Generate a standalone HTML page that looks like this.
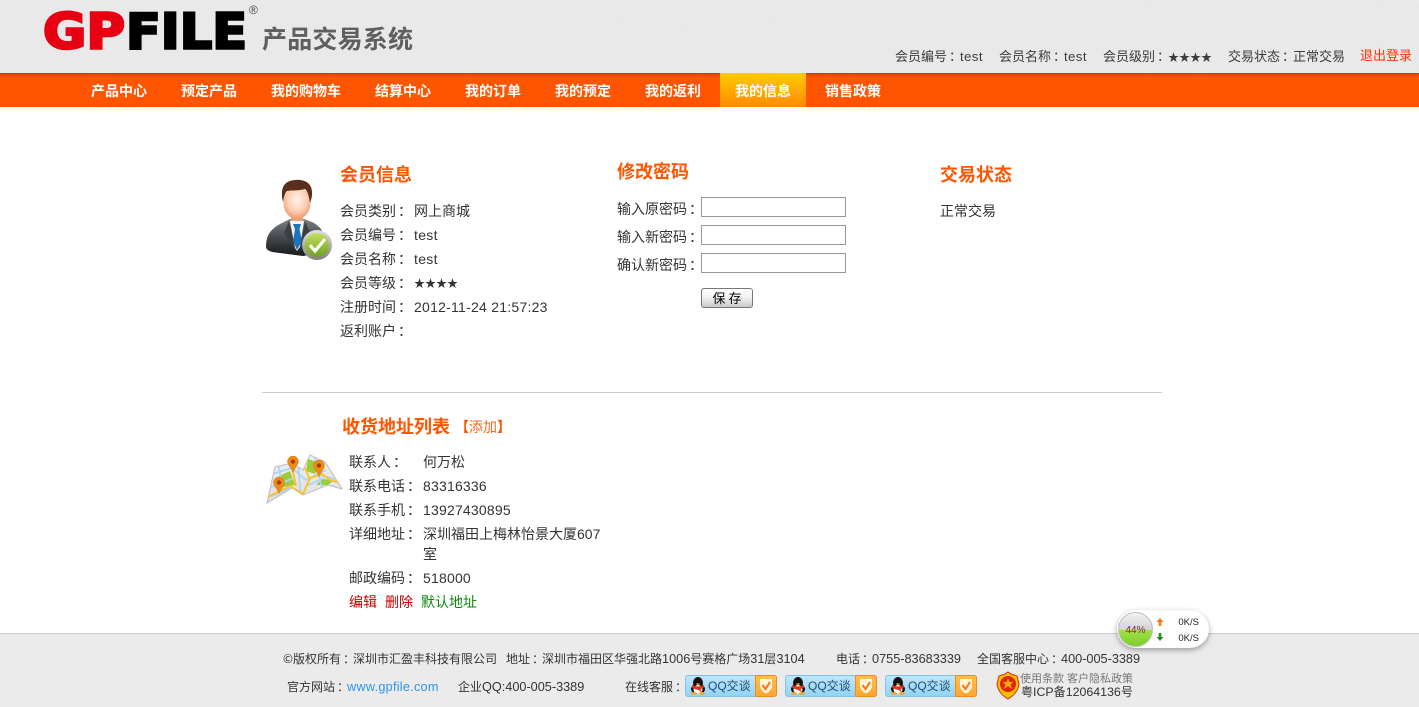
<!DOCTYPE html>
<html lang="zh-CN">
<head>
<meta charset="utf-8">
<title>GPFILE 产品交易系统</title>
<style>
html,body{margin:0;padding:0;width:1419px;height:707px;overflow:hidden;background:#fff}
body{position:relative;font-family:"Liberation Sans","Noto Sans CJK SC",sans-serif;font-size:14px;color:#333}
.t{position:absolute;white-space:nowrap;line-height:20px;height:20px}
.c{font-family:"Noto Sans CJK TC",sans-serif;position:relative;left:2px}
.d{font-size:12.7px}
.st{font-family:"Noto Sans CJK SC",sans-serif;font-size:11px}
a{text-decoration:none;color:inherit}
#hdr{position:absolute;left:0;top:0;width:1419px;height:73px;background:#eeeeee}
#nav{position:absolute;left:0;top:73px;width:1419px;height:34px;background:linear-gradient(#b84000 0,#e65000 2px,#f95300 4px,#ff5500 6px,#ff5500 100%)}
#act{position:absolute;left:720px;top:73px;width:86px;height:34px;background:linear-gradient(#ffcc00,#ff8a00)}
.n{color:#fff;font-weight:bold;font-size:14px;top:81px}
.h{color:#ff5500;font-weight:bold;font-size:18px;line-height:24px;height:24px}
.top{font-size:13px;top:46px;color:#3c3c3c}
.top .l{letter-spacing:.5px}
.in{position:absolute;left:701px;width:143px;height:18px;border:1px solid #999;background:#fff}
#btn{position:absolute;left:701px;top:288px;width:50px;height:18px;border:1px solid #777;border-radius:3px;background:linear-gradient(#fff,#f2f2f2 45%,#c9c9c9);font-size:13px;line-height:18px;text-align:center;color:#000;font-family:"WenQuanYi Zen Hei","Noto Sans CJK SC",sans-serif}
#line{position:absolute;left:262px;top:392px;width:900px;height:1px;background:#ccc}
#ftr{position:absolute;left:0;top:633px;width:1419px;height:74px;background:#ebebeb;border-top:1px solid #ccc;box-sizing:border-box}
.f{font-size:12px;color:#333}
.qq{position:absolute;top:675px;width:92px;height:22px;box-sizing:border-box;border:1px solid #7cc6ee;border-radius:3px;background:linear-gradient(#bfe7fb,#94d3f5)}
.qq b{position:absolute;right:-1px;top:-1px;width:20px;height:20px;border:1px solid #f08c1e;border-radius:0 3px 3px 0;background:linear-gradient(#ffc050,#ffa52e)}
.qq span{position:absolute;left:22px;top:0;line-height:20px;font-size:12px;color:#1b4d70;white-space:nowrap}
.qq svg{position:absolute}
#w{position:absolute;left:1117px;top:610px;width:92px;height:38px;background:#fff;border-radius:19px;box-shadow:0 2px 6px rgba(0,0,0,.35)}
.s{position:absolute;font-size:9.5px;line-height:12px;color:#222;right:10px}
</style>
</head>
<body>
<div id="hdr">
<svg width="1419" height="73" style="position:absolute;left:0;top:0">
<filter id="n"><feTurbulence type="fractalNoise" baseFrequency=".7" numOctaves="2" seed="4"/><feColorMatrix values="0 0 0 0 0 0 0 0 0 0 0 0 0 0 0 0 0 0 .14 0"/></filter>
<rect width="1419" height="73" filter="url(#n)" opacity=".3"/>
<text x="43" y="48.700" font-family="DejaVu Sans" font-weight="bold" font-size="49" fill="#e60012" stroke="#e60012" stroke-width="2.600" textLength="82" lengthAdjust="spacingAndGlyphs">GP</text>
<text x="126" y="48.700" font-family="DejaVu Sans" font-weight="bold" font-size="49" fill="#000" stroke="#000" stroke-width="2.600" textLength="121" lengthAdjust="spacingAndGlyphs">FILE</text>
<text x="249" y="14" font-family="Liberation Sans" font-size="12" fill="#444">®</text>
<text x="262" y="48" font-family="Noto Sans CJK SC" font-weight="bold" font-size="25" fill="#5f5f5f" textLength="151">产品交易系统</text>
</svg>
</div>
<div id="nav"></div>
<div id="act"></div>
<span class="t n" style="left:91px">产品中心</span>
<span class="t n" style="left:181px">预定产品</span>
<span class="t n" style="left:271px">我的购物车</span>
<span class="t n" style="left:375px">结算中心</span>
<span class="t n" style="left:465px">我的订单</span>
<span class="t n" style="left:555px">我的预定</span>
<span class="t n" style="left:645px">我的返利</span>
<span class="t n" style="left:735px">我的信息</span>
<span class="t n" style="left:825px">销售政策</span>

<span class="t top" style="left:895px">会员编号<span class="c">：</span><span class="l">test</span></span>
<span class="t top" style="left:999px">会员名称<span class="c">：</span><span class="l">test</span></span>
<span class="t top" style="left:1103px">会员级别<span class="c">：</span><span class="st">★★★★</span></span>
<span class="t top" style="left:1228px">交易状态<span class="c">：</span>正常交易</span>
<span class="t top" style="left:1360px;color:#ff3300">退出登录</span>

<!-- person -->
<svg style="position:absolute;left:260px;top:175px" width="80" height="90" viewBox="0 0 80 90">
<defs>
<linearGradient id="su" x1="0" y1="0" x2="0" y2="1"><stop offset="0" stop-color="#7d8185"/><stop offset=".45" stop-color="#4a4d51"/><stop offset="1" stop-color="#17191c"/></linearGradient>
<radialGradient id="fa" cx=".5" cy=".4" r=".65"><stop offset="0" stop-color="#fff3ec"/><stop offset=".55" stop-color="#fcd0b4"/><stop offset="1" stop-color="#e98f5e"/></radialGradient>
<linearGradient id="gr" x1="0" y1="0" x2="0" y2="1"><stop offset="0" stop-color="#e2e2e2"/><stop offset="1" stop-color="#808080"/></linearGradient>
<linearGradient id="gn" x1="0" y1="0" x2="0" y2="1"><stop offset="0" stop-color="#c4de5e"/><stop offset="1" stop-color="#6fa21f"/></linearGradient>
</defs>
<path d="M6 72 C6 62 9 55 20 49 L30 44 L44 44 L52 47 C58 50 62 54 64 60 L60 78 L43 81 L12 77 Q6 75 6 72 Z" fill="url(#su)"/>
<path d="M30 46 L35 73 L37 76 L40 72 L44 46 L37 42 Z" fill="#f3f5f8"/>
<path d="M33 49 L41 49 L39.500 54 L42 66 L37 75 L33 66 L35 54 Z" fill="#1c74bb"/>
<path d="M29 46 L35 74 L24 58 Z M45 46 L40 74 L50 58 Z" fill="#3b3e42"/>
<rect x="31" y="36" width="12" height="10" fill="#e8a27a"/>
<ellipse cx="37" cy="28" rx="13.500" ry="16" fill="url(#fa)"/>
<path d="M23 27 C20 14 23 6 35 5 C46 4 53 9 52 20 C52 22 51 25 50 28 C49 21 48 17 45 14 C38 16 31 15 27 16 C25 18 24 22 23 27 Z" fill="#5b2f1d"/>
<circle cx="57" cy="70" r="15" fill="url(#gr)"/>
<circle cx="57" cy="70" r="12" fill="url(#gn)"/>
<path d="M50 70 L55 76 L65 64" fill="none" stroke="#fff" stroke-width="3.200"/>
</svg>

<span class="t h" style="left:340px;top:163px">会员信息</span>
<span class="t" style="left:340px;top:201px">会员类别<span class="c">：</span></span><span class="t" style="left:414px;top:201px">网上商城</span>
<span class="t" style="left:340px;top:225px">会员编号<span class="c">：</span></span><span class="t" style="left:414px;top:225px;letter-spacing:.3px">test</span>
<span class="t" style="left:340px;top:249px">会员名称<span class="c">：</span></span><span class="t" style="left:414px;top:249px;letter-spacing:.3px">test</span>
<span class="t" style="left:340px;top:273px">会员等级<span class="c">：</span></span><span class="t st" style="left:414px;top:273px">★★★★</span>
<span class="t" style="left:340px;top:297px">注册时间<span class="c">：</span></span><span class="t" style="left:414px;top:297px;letter-spacing:.25px">2012-11-24 21:57:23</span>
<span class="t" style="left:340px;top:321px">返利账户<span class="c">：</span></span>

<span class="t h" style="left:617px;top:160px">修改密码</span>
<span class="t" style="left:617px;top:199px">输入原密码<span class="c">：</span></span>
<span class="t" style="left:617px;top:227px">输入新密码<span class="c">：</span></span>
<span class="t" style="left:617px;top:255px">确认新密码<span class="c">：</span></span>
<div class="in" style="top:197px"></div>
<div class="in" style="top:225px"></div>
<div class="in" style="top:253px"></div>
<div id="btn">保 存</div>

<span class="t h" style="left:940px;top:163px">交易状态</span>
<span class="t" style="left:940px;top:201px">正常交易</span>

<div id="line"></div>

<span class="t h" style="left:342px;top:415px">收货地址列表</span>
<span class="t" style="left:455px;top:417px;color:#ff5500"><b>【</b><span style="color:#f26a1e">添加</span><b>】</b></span>

<!-- map -->
<svg style="position:absolute;left:260px;top:450px" width="85" height="60" viewBox="0 0 85 60">
<defs><linearGradient id="m" x1="0" y1="0" x2="0" y2="1"><stop offset="0" stop-color="#f0f2f3"/><stop offset="1" stop-color="#dcdee0"/></linearGradient>
<clipPath id="mc"><path d="M7 53 L15 17 L32 13 L43 20 L50 5 L65 12 L82 39 L68 35 L43 45 L32 38 Z"/></clipPath></defs>
<path d="M7 53 L15 17 L32 13 L43 20 L50 5 L65 12 L82 39 L68 35 L43 45 L32 38 Z" fill="url(#m)" stroke="#c4c4c4" stroke-width="1.200"/>
<g clip-path="url(#mc)">
<path d="M19 26 L30 21 L35 35 L23 37 Z M48 9 L60 13 L55 24 L46 21 Z M62 29 L74 30 L68 35 L56 35 Z" fill="#9ccb3c"/>
<path d="M12 24 L32 18 L46 30 L66 20 M18 12 L24 48 M9 38 L34 28 M54 6 L62 38 M38 14 L41 46 M56 24 L78 30 M12 46 L30 38 M46 36 L64 28" fill="none" stroke="#aed6f2" stroke-width="1.800"/>
<path d="M8 47 L30 36 L43 44 L50 28 L62 24 L70 30 L84 34 M31 12 L36 36 M45 18 L50 30" fill="none" stroke="#fdc22f" stroke-width="2"/>
</g>
<g fill="#ee8a12" stroke="#c96f08" stroke-width=".4">
<path d="M33 6 a5.500 5.500 0 0 1 5.500 5.500 c0 3 -3.500 6 -5.500 11 c-2 -5 -5.500 -8 -5.500 -11 a5.500 5.500 0 0 1 5.500 -5.500 Z"/>
<path d="M59 10 a5.500 5.500 0 0 1 5.500 5.500 c0 3 -3.500 6 -5.500 11 c-2 -5 -5.500 -8 -5.500 -11 a5.500 5.500 0 0 1 5.500 -5.500 Z"/>
<path d="M19 27 a5.500 5.500 0 0 1 5.500 5.500 c0 3 -3.500 6 -5.500 11 c-2 -5 -5.500 -8 -5.500 -11 a5.500 5.500 0 0 1 5.500 -5.500 Z"/>
</g>
<g fill="#a5400c"><circle cx="33" cy="11.500" r="2.200"/><circle cx="59" cy="15.500" r="2.200"/><circle cx="19" cy="32.500" r="2.200"/></g>
</svg>

<span class="t" style="left:349px;top:452px">联系人<span class="c">：</span></span><span class="t" style="left:423px;top:452px">何万松</span>
<span class="t" style="left:349px;top:476px">联系电话<span class="c">：</span></span><span class="t" style="left:423px;top:476px;letter-spacing:.2px">83316336</span>
<span class="t" style="left:349px;top:500px">联系手机<span class="c">：</span></span><span class="t" style="left:423px;top:500px;letter-spacing:.2px">13927430895</span>
<span class="t" style="left:349px;top:524px">详细地址<span class="c">：</span></span><span class="t" style="left:423px;top:524px">深圳福田上梅林怡景大厦607</span>
<span class="t" style="left:423px;top:544px">室</span>
<span class="t" style="left:349px;top:568px">邮政编码<span class="c">：</span></span><span class="t" style="left:423px;top:568px;letter-spacing:.2px">518000</span>
<span class="t" style="left:349px;top:592px;color:#c00000">编辑</span>
<span class="t" style="left:385px;top:592px;color:#c00000">删除</span>
<span class="t" style="left:421px;top:592px;color:#0a8a0a">默认地址</span>

<div id="ftr"></div>
<span class="t f" style="left:283px;top:649px"><span style="font-family:'Noto Sans CJK SC'">©</span>版权所有<span class="c">：</span>深圳市汇盈丰科技有限公司</span>
<span class="t f" style="left:506px;top:649px">地址<span class="c">：</span>深圳市福田区华强北路<span class="d">1006</span>号赛格广场<span class="d">31</span>层<span class="d">3104</span></span>
<span class="t f" style="left:836px;top:649px">电话<span class="c">：</span><span class="d">0755-83683339</span></span>
<span class="t f" style="left:977px;top:649px">全国客服中心<span class="c">：</span><span class="d">400-005-3389</span></span>
<span class="t f" style="left:287px;top:677px">官方网站<span class="c">：</span><span class="d" style="color:#2f95ea;letter-spacing:.25px">www.gpfile.com</span></span>
<span class="t f" style="left:458px;top:677px">企业<span class="d">QQ:400-005-3389</span></span>
<span class="t f" style="left:625px;top:677px">在线客服<span class="c">：</span></span>

<div class="qq" style="left:685px"><svg width="18" height="18" style="left:3px;top:1px" viewBox="0 0 18 18"><ellipse cx="9" cy="6" rx="5" ry="6" fill="#111"/><ellipse cx="9" cy="12" rx="7" ry="5" fill="#111"/><ellipse cx="9" cy="12.500" rx="4.500" ry="4.500" fill="#fff"/><path d="M3 8 Q9 11 15 8 L15 10.500 Q12 12 11.500 12 L13 15.500 L9.500 13 Q5 12 3 10.500 Z" fill="#e0301e"/><path d="M6.500 6.500 L11.500 6.500 L9 8.500 Z" fill="#f5a623"/><ellipse cx="5" cy="16.500" rx="3.200" ry="1.400" fill="#f5a623"/><ellipse cx="13" cy="16.500" rx="3.200" ry="1.400" fill="#f5a623"/></svg><span><span class="d" style="position:static">QQ</span>交谈</span><b><svg width="14" height="16" style="left:3px;top:2px" viewBox="0 0 14 16"><path d="M1 1 L13 1 L13 9 Q11.500 13.500 7 15.500 Q2.500 13.500 1 9 Z" fill="#fff3d8"/><path d="M3.500 7 L6.500 11 L11 4" fill="none" stroke="#f07818" stroke-width="2"/></svg></b></div>
<div class="qq" style="left:785px"><svg width="18" height="18" style="left:3px;top:1px" viewBox="0 0 18 18"><ellipse cx="9" cy="6" rx="5" ry="6" fill="#111"/><ellipse cx="9" cy="12" rx="7" ry="5" fill="#111"/><ellipse cx="9" cy="12.500" rx="4.500" ry="4.500" fill="#fff"/><path d="M3 8 Q9 11 15 8 L15 10.500 Q12 12 11.500 12 L13 15.500 L9.500 13 Q5 12 3 10.500 Z" fill="#e0301e"/><path d="M6.500 6.500 L11.500 6.500 L9 8.500 Z" fill="#f5a623"/><ellipse cx="5" cy="16.500" rx="3.200" ry="1.400" fill="#f5a623"/><ellipse cx="13" cy="16.500" rx="3.200" ry="1.400" fill="#f5a623"/></svg><span><span class="d" style="position:static">QQ</span>交谈</span><b><svg width="14" height="16" style="left:3px;top:2px" viewBox="0 0 14 16"><path d="M1 1 L13 1 L13 9 Q11.500 13.500 7 15.500 Q2.500 13.500 1 9 Z" fill="#fff3d8"/><path d="M3.500 7 L6.500 11 L11 4" fill="none" stroke="#f07818" stroke-width="2"/></svg></b></div>
<div class="qq" style="left:885px"><svg width="18" height="18" style="left:3px;top:1px" viewBox="0 0 18 18"><ellipse cx="9" cy="6" rx="5" ry="6" fill="#111"/><ellipse cx="9" cy="12" rx="7" ry="5" fill="#111"/><ellipse cx="9" cy="12.500" rx="4.500" ry="4.500" fill="#fff"/><path d="M3 8 Q9 11 15 8 L15 10.500 Q12 12 11.500 12 L13 15.500 L9.500 13 Q5 12 3 10.500 Z" fill="#e0301e"/><path d="M6.500 6.500 L11.500 6.500 L9 8.500 Z" fill="#f5a623"/><ellipse cx="5" cy="16.500" rx="3.200" ry="1.400" fill="#f5a623"/><ellipse cx="13" cy="16.500" rx="3.200" ry="1.400" fill="#f5a623"/></svg><span><span class="d" style="position:static">QQ</span>交谈</span><b><svg width="14" height="16" style="left:3px;top:2px" viewBox="0 0 14 16"><path d="M1 1 L13 1 L13 9 Q11.500 13.500 7 15.500 Q2.500 13.500 1 9 Z" fill="#fff3d8"/><path d="M3.500 7 L6.500 11 L11 4" fill="none" stroke="#f07818" stroke-width="2"/></svg></b></div>

<svg style="position:absolute;left:996px;top:671px" width="24" height="29" viewBox="0 0 24 29">
<path d="M12 1 L15 3 L21 5 L23 13 Q22 22 12 28 Q2 22 1 13 L3 5 L9 3 Z" fill="#f2c200" stroke="#d92a10" stroke-width="1"/>
<circle cx="12" cy="13" r="8" fill="#e3230f"/>
<path d="M12 7 L13.500 11 L17 11 L14.500 13.500 L16 18 L12 15 L8 18 L9.500 13.500 L7 11 L10.500 11 Z" fill="#f2b400"/>
</svg>
<span class="t" style="left:1020px;top:669px;font-size:11px;color:#777">使用条款 客户隐私政策</span>
<span class="t f" style="left:1021px;top:682px">粤<span style="font-size:12.4px">ICP</span>备<span style="font-size:12.4px">12064136</span>号</span>

<div id="w">
<svg width="92" height="38" style="position:absolute;left:0;top:0">
<defs><linearGradient id="wg" x1="0" y1="0" x2="0" y2="1"><stop offset="0" stop-color="#f4f4f4"/><stop offset=".52" stop-color="#d2d2d2"/><stop offset=".52" stop-color="#9fe04a"/><stop offset="1" stop-color="#7ccf25"/></linearGradient></defs>
<circle cx="18.500" cy="19.500" r="17" fill="url(#wg)" stroke="#bdbdbd" stroke-width="1"/>
<text x="18.500" y="23" font-family="Liberation Sans" font-size="10" fill="#7a2b2b" text-anchor="middle">44%</text>
<path d="M43 8 L46.500 12 L44.300 12 L44.300 16 L41.700 16 L41.700 12 L39.500 12 Z" fill="#f47a12"/>
<path d="M43 31 L46.500 27 L44.300 27 L44.300 23 L41.700 23 L41.700 27 L39.500 27 Z" fill="#2a8a1e"/>
</svg>
<span class="s" style="top:7px">0K/S</span>
<span class="s" style="top:23px">0K/S</span>
</div>
</body>
</html>
